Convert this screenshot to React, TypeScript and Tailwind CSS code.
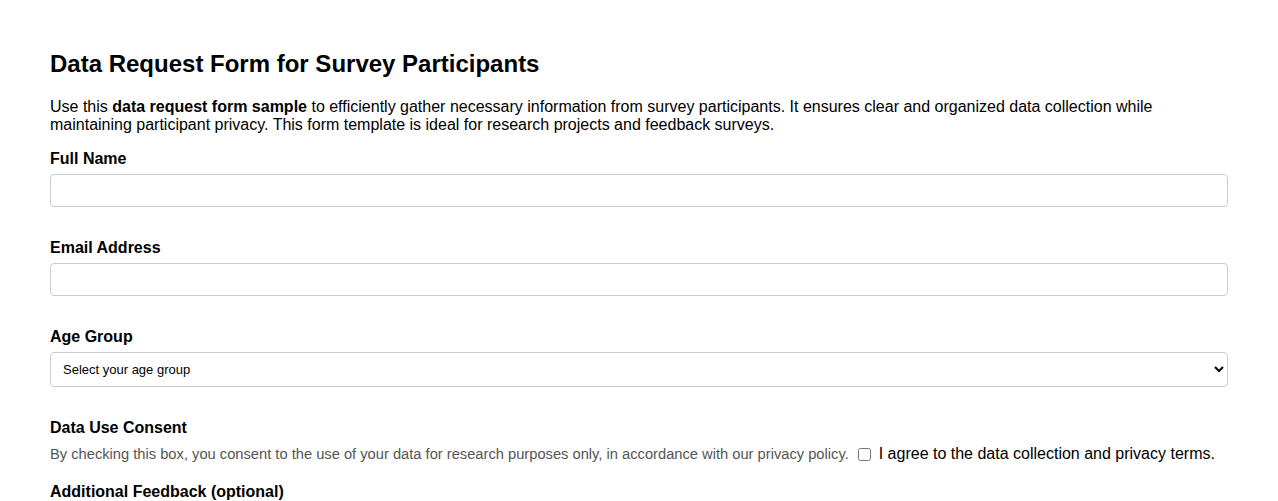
import React from "react";

export default function App() {
  return (
    <div className="min-h-screen bg-white text-black" style={{ fontFamily: '"Liberation Sans", Arial, sans-serif' }}>
      <div className="px-[50px] pt-[50px]">
        <h1 className="text-[24px] font-bold leading-[28px] m-0">Data Request Form for Survey Participants</h1>
        <p className="mt-[20px] text-[16px] leading-[18px]">
          Use this <strong>data request form sample</strong> to efficiently gather necessary information from survey participants. It ensures clear and organized data collection while maintaining participant privacy. This form template is ideal for research projects and feedback surveys.
        </p>
        <form className="flex flex-col">
          <label className="mt-[16px] block text-[16px] font-bold leading-[18px]">Full Name</label>
          <input type="text" className="mt-[6px] block h-[33px] w-full rounded-[4px] border border-[#cccccc] px-2 text-[16px]" />
          <label className="mt-[32px] block text-[16px] font-bold leading-[18px]">Email Address</label>
          <input type="email" className="mt-[6px] block h-[33px] w-full rounded-[4px] border border-[#cccccc] px-2 text-[16px]" />
          <label className="mt-[32px] block text-[16px] font-bold leading-[18px]">Age Group</label>
          <select className="mt-[6px] block h-[35px] w-full rounded-[4px] border border-[#cccccc] bg-white pl-[8px] pr-[6px] text-[13px]" style={{ appearance: "auto" }}>
            <option>Select your age group</option>
            <option>18-24</option>
            <option>25-34</option>
            <option>35-44</option>
            <option>45+</option>
          </select>
          <label className="mt-[32px] block text-[16px] font-bold leading-[18px]">Data Use Consent</label>
          <div className="mt-[8px] flex items-center whitespace-nowrap text-[16px] leading-[18px]">
            <span className="text-[14.7px] text-[#555555]">By checking this box, you consent to the use of your data for research purposes only, in accordance with our privacy policy.</span>
            <input type="checkbox" className="ml-[9px] mr-[8px] h-[13px] w-[13px] shrink-0" style={{ appearance: "auto" }} />
            <span>I agree to the data collection and privacy terms.</span>
          </div>
          <label className="mt-[20px] block text-[16px] font-bold leading-[18px]">Additional Feedback (optional)</label>
          <textarea className="mt-[7px] block h-[80px] w-full rounded-[4px] border border-[#cccccc] px-2" />
        </form>
      </div>
    </div>
  );
}
